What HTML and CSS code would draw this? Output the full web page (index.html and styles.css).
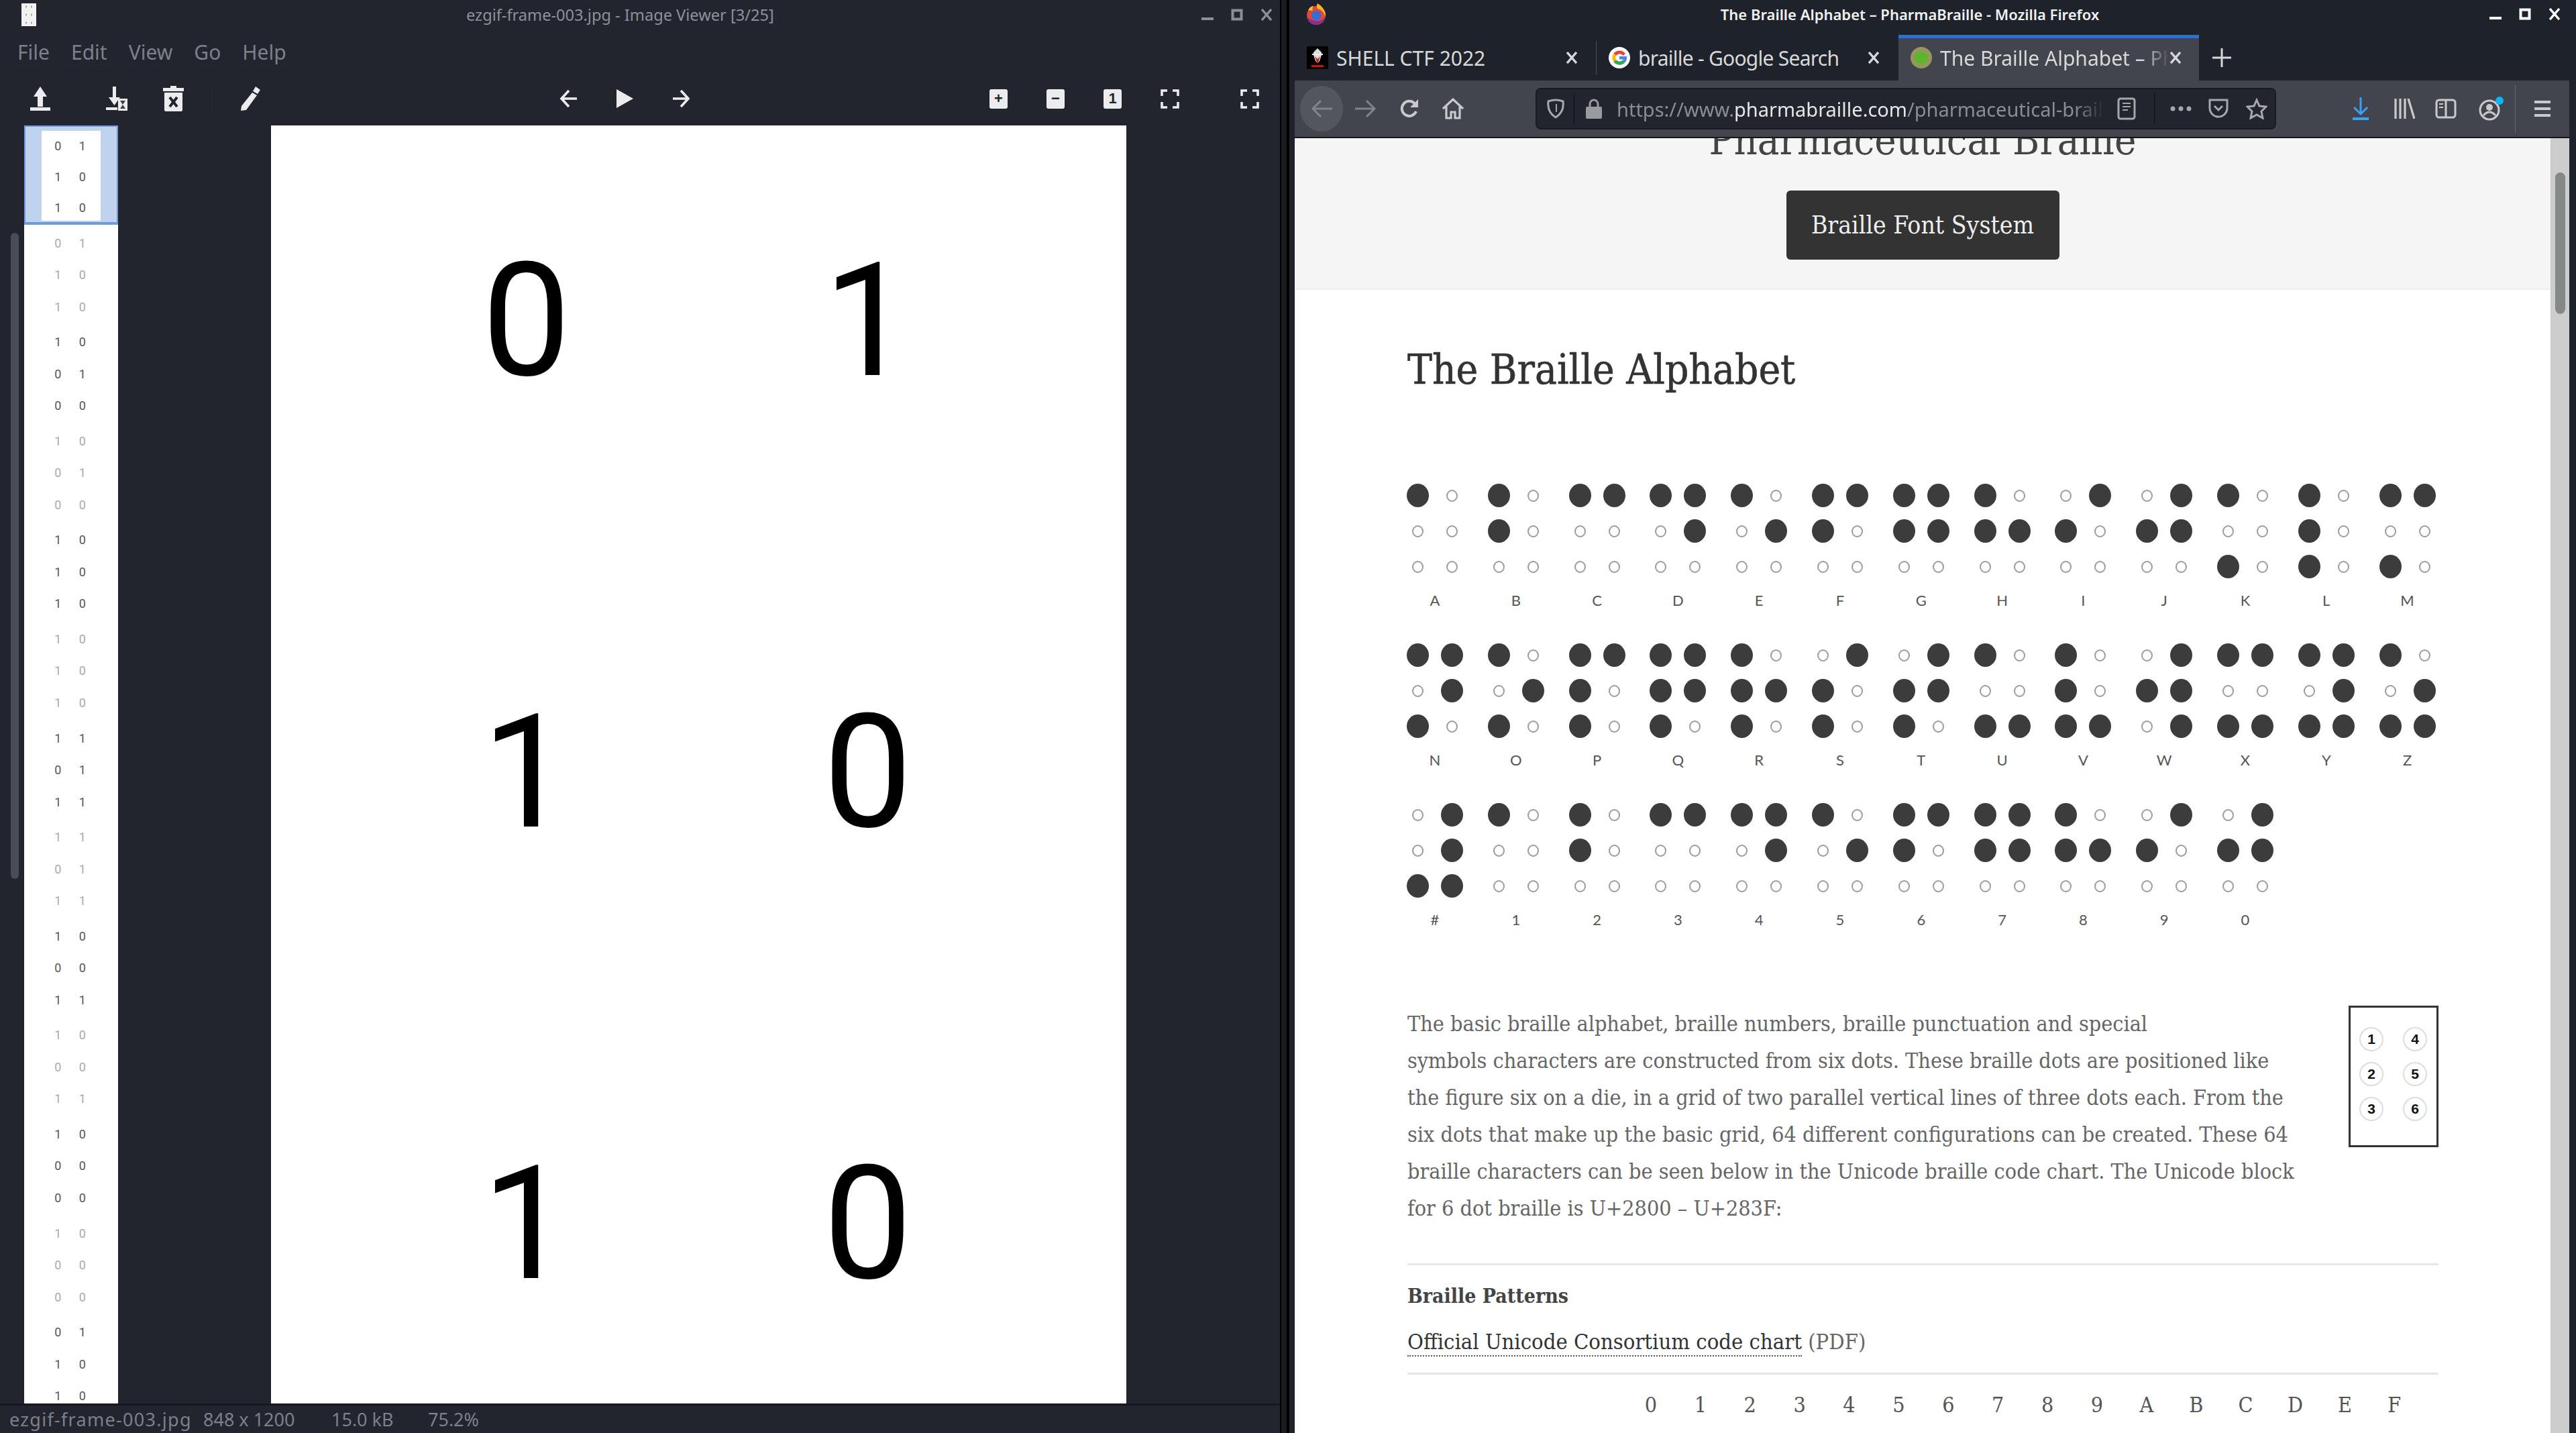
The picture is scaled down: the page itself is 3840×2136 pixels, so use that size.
FILE: index.html
```html
<!DOCTYPE html>
<html lang="en">
<head>
    <meta charset="UTF-8">
    <meta name="viewport" content="width=device-width, initial-scale=1.0">
    <title>Desktop</title>
    <link rel="stylesheet" href="styles.css">
</head>
<body>

<svg class="defs" width="0" height="0">
    <symbol id="win-x" viewBox="0 0 18 18"><path d="M2 1L16 17M16 1L2 17" fill="none" stroke="currentColor" stroke-width="3.4"/></symbol>
    <symbol id="win-min" viewBox="0 0 18 18"><rect x="0" y="13" width="18" height="4" fill="currentColor"/></symbol>
    <symbol id="win-max" viewBox="0 0 18 18"><rect x="2.5" y="2.5" width="13" height="13" fill="none" stroke="currentColor" stroke-width="4"/></symbol>
    <symbol id="fit" viewBox="0 0 28 29"><path d="M2 10V2H10M18 2H26V10M2 19V27H10M18 27H26V19" fill="none" stroke="currentColor" stroke-width="3.6"/></symbol>
</svg>

<!-- image viewer -->
<div class="viewer">
    <div class="titlebar">
        <svg class="app-thumb" width="22" height="34" viewBox="0 0 22 34"><rect width="22" height="34" fill="#f2f2f2"/><path d="M6 5h2M14 5h2M6 17h2M14 17h2M6 29h2M14 29h2" stroke="#aaa" stroke-width="3"/></svg>
        <span class="win-title">ezgif-frame-003.jpg - Image Viewer [3/25]</span>
        <div class="win-btns">
            <svg><use href="#win-min"/></svg>
            <svg><use href="#win-max"/></svg>
            <svg><use href="#win-x"/></svg>
        </div>
    </div>
    <div class="menubar">
        <span>File</span><span>Edit</span><span>View</span><span>Go</span><span>Help</span>
    </div>
    <div class="toolbar">
        <div class="tool"><svg width="30" height="36" viewBox="0 0 30 36"><path d="M15 0L25 15H19V30H11V15H5ZM0 31H30V36H0Z" fill="currentColor"/></svg></div>
        <div class="sep"></div>
        <div class="tool"><svg width="32" height="36" viewBox="0 0 32 36"><path d="M10 0H15V16H21L12.500 28L4 16H10ZM0 31H17V35H0ZM18 18H32V36H18Z" fill="currentColor"/><path d="M21 21H29L21 33H29Z" fill="#3a3d46"/></svg></div>
        <div class="tool"><svg width="31" height="38" viewBox="0 0 31 38"><path d="M11 0H20V3H31V8H0V3H11ZM2 10H29V36Q29 38 27 38H4Q2 38 2 36Z" fill="currentColor"/><path d="M10 17L21 31M21 17L10 31" stroke="#22252e" stroke-width="4"/></svg></div>
        <div class="sep"></div>
        <div class="tool"><svg width="32" height="36" viewBox="0 0 32 36"><path d="M24 0L31 5L27 11L20 7ZM19 9L26 13L10 35L2 36L3 29Z" fill="currentColor"/></svg></div>
        <div class="tool nav-first"><svg width="27" height="28" viewBox="0 0 27 28"><path d="M27 14H4M15 2L4 14L15 26" fill="none" stroke="currentColor" stroke-width="3.6"/></svg></div>
        <div class="tool"><svg width="25" height="28" viewBox="0 0 25 28"><path d="M0 0L25 14L0 28Z" fill="currentColor"/></svg></div>
        <div class="tool"><svg width="27" height="28" viewBox="0 0 27 28"><path d="M0 14H23M12 2L23 14L12 26" fill="none" stroke="currentColor" stroke-width="3.6"/></svg></div>
        <div class="tool zoom-first"><span class="zoom-key">+</span></div>
        <div class="tool"><span class="zoom-key">−</span></div>
        <div class="tool"><span class="zoom-key">1</span></div>
        <div class="tool"><svg width="28" height="29"><use href="#fit"/></svg></div>
        <div class="sep sep-end"></div>
        <div class="tool"><svg width="32" height="29"><use href="#fit"/></svg></div>
    </div>
    <div class="viewer-main">
        <div class="side-scroll"><div class="side-thumb"></div></div>
        <div class="strip">
            <div class="frame current"><div class="frame-inner"><b>0 1</b><b>1 0</b><b>1 0</b></div></div>
            <div class="frame faded"><b>0 1</b><b>1 0</b><b>1 0</b></div>
            <div class="frame"><b>1 0</b><b>0 1</b><b>0 0</b></div>
            <div class="frame faded"><b>1 0</b><b>0 1</b><b>0 0</b></div>
            <div class="frame"><b>1 0</b><b>1 0</b><b>1 0</b></div>
            <div class="frame faded"><b>1 0</b><b>1 0</b><b>1 0</b></div>
            <div class="frame"><b>1 1</b><b>0 1</b><b>1 1</b></div>
            <div class="frame faded"><b>1 1</b><b>0 1</b><b>1 1</b></div>
            <div class="frame"><b>1 0</b><b>0 0</b><b>1 1</b></div>
            <div class="frame faded"><b>1 0</b><b>0 0</b><b>1 1</b></div>
            <div class="frame"><b>1 0</b><b>0 0</b><b>0 0</b></div>
            <div class="frame faded"><b>1 0</b><b>0 0</b><b>0 0</b></div>
            <div class="frame"><b>0 1</b><b>1 0</b><b>1 0</b></div>
        </div>
        <div class="picture">
            <span>0</span><span>1</span>
            <span>1</span><span>0</span>
            <span>1</span><span>0</span>
        </div>
    </div>
    <div class="statusbar">
        <span class="st-name">ezgif-frame-003.jpg</span>
        <span class="st-size">848 x 1200</span>
        <span class="st-kb">15.0 kB</span>
        <span>75.2%</span>
    </div>
</div>

<div class="gutter"></div>

<!-- firefox -->
<div class="firefox">
    <div class="titlebar ff-title">
        <svg class="ff-logo" width="30" height="32" viewBox="0 0 30 32">
            <circle cx="15" cy="18" r="14" fill="#e8452f"/>
            <path d="M1 18C1 26 8 32 15 32C23 32 29 26 29 18C26 26 18 28 10 25C5 24 2 21 1 18Z" fill="#8a2f8f"/>
            <path d="M17 0C25 5 30 12 29 20C26 12 22 9 17 8C15 5 16 3 17 0Z" fill="#fcb32c"/>
            <path d="M3 10C5 6 8 4 11 4C9 7 9 9 10 11Z" fill="#fdc42d"/>
            <circle cx="15" cy="18" r="7.500" fill="#3c6ad6"/>
        </svg>
        <span class="win-title">The Braille Alphabet – PharmaBraille - Mozilla Firefox</span>
        <div class="win-btns">
            <svg><use href="#win-min"/></svg>
            <svg><use href="#win-max"/></svg>
            <svg><use href="#win-x"/></svg>
        </div>
    </div>
    <div class="tabs">
        <div class="tab divided">
            <svg class="fav" width="32" height="34" viewBox="0 0 32 34"><rect width="32" height="34" fill="#000"/><path d="M16 3L22 9V13L19 22L16 25L13 22L10 13V9Z" fill="#ddd"/><path d="M8 11H24V13H8Z" fill="#eee"/><path d="M12 15L16 19L20 15L17 24H15Z" fill="#b22"/><rect x="7" y="28" width="18" height="3" fill="#c11"/></svg>
            <span class="tab-label">SHELL CTF 2022</span>
            <svg class="tab-x"><use href="#win-x"/></svg>
        </div>
        <div class="tab">
            <svg class="fav" width="32" height="34" viewBox="0 0 32 34">
                <circle cx="16" cy="17" r="16" fill="#fff"/>
                <path d="M25 11A11 11 0 0 0 7.500 10.500L11 14A6.500 6.500 0 0 1 21.500 14Z" fill="#ea4335"/>
                <path d="M7.500 10.500A11 11 0 0 0 7.500 23.500L11 20A6.500 6.500 0 0 1 11 14Z" fill="#fbbc05"/>
                <path d="M7.500 23.500A11 11 0 0 0 24.500 24L21 20.500A6.500 6.500 0 0 1 11 20Z" fill="#34a853"/>
                <path d="M27 15H16V19.500H22A6 6 0 0 1 21 20.500L24.500 24A11 11 0 0 0 27 15Z" fill="#4285f4"/>
            </svg>
            <span class="tab-label tab-tight">braille - Google Search</span>
            <svg class="tab-x"><use href="#win-x"/></svg>
        </div>
        <div class="tab active">
            <svg class="fav" width="32" height="34" viewBox="0 0 32 34"><circle cx="16" cy="17" r="16" fill="#97975c"/><circle cx="16" cy="17" r="10" fill="#5db52e"/></svg>
            <span class="tab-label fade">The Braille Alphabet – PharmaBraille</span>
            <svg class="tab-x"><use href="#win-x"/></svg>
        </div>
        <svg class="new-tab" width="28" height="28" viewBox="0 0 28 28"><path d="M14 0V28M0 14H28" stroke="currentColor" stroke-width="3"/></svg>
    </div>
    <div class="nav">
        <div class="nav-btn back"><svg width="32" height="28" viewBox="0 0 32 28"><path d="M32 14H3M15 2L3 14L15 26" fill="none" stroke="currentColor" stroke-width="3"/></svg></div>
        <div class="nav-btn off"><svg width="32" height="28" viewBox="0 0 32 28"><path d="M0 14H29M17 2L29 14L17 26" fill="none" stroke="currentColor" stroke-width="3"/></svg></div>
        <div class="nav-btn"><svg width="30" height="30" viewBox="0 0 30 30"><path d="M25 19A11 11 0 1 1 23 7.500" fill="none" stroke="currentColor" stroke-width="4"/><path d="M28 1V13H16Z" fill="currentColor"/></svg></div>
        <div class="nav-btn"><svg width="32" height="32" viewBox="0 0 32 32"><path d="M1 16L16 2L31 16M6 13V30H13V21H19V30H26V13" fill="none" stroke="currentColor" stroke-width="3.200"/></svg></div>
        <div class="urlbar">
            <div class="url-icon shield"><svg width="26" height="30" viewBox="0 0 26 30"><path d="M2 4Q13 0 24 4Q26 20 13 28Q0 20 2 4Z" fill="none" stroke="currentColor" stroke-width="3"/><path d="M13 8L15 8V20H13Z" fill="currentColor"/></svg></div>
            <div class="url-sep"></div>
            <div class="url-icon lock"><svg width="26" height="30" viewBox="0 0 26 30"><path d="M7 13V8A6 6 0 0 1 19 8V13" fill="none" stroke="currentColor" stroke-width="3"/><rect x="1" y="12" width="24" height="18" rx="2" fill="currentColor"/></svg></div>
            <div class="url-text"><span>https://www.</span><em>pharmabraille.com</em><span>/pharmaceutical-braille</span></div>
            <div class="url-icon reader"><svg width="28" height="34" viewBox="0 0 28 34"><rect x="2" y="2" width="24" height="30" rx="3" fill="none" stroke="currentColor" stroke-width="3"/><path d="M8 9H20M8 14H20M8 19H16" stroke="currentColor" stroke-width="2"/></svg></div>
            <div class="url-sep sep-page"></div>
            <div class="url-icon more"><svg width="32" height="8" viewBox="0 0 32 8"><circle cx="4" cy="4" r="3.500" fill="currentColor"/><circle cx="16" cy="4" r="3.500" fill="currentColor"/><circle cx="28" cy="4" r="3.500" fill="currentColor"/></svg></div>
            <div class="url-icon pocket"><svg width="32" height="32" viewBox="0 0 32 32"><path d="M3 3H29V15A13 13 0 0 1 3 15Z" fill="none" stroke="currentColor" stroke-width="3"/><path d="M10 12L16 18L22 12" fill="none" stroke="currentColor" stroke-width="3"/></svg></div>
            <div class="url-icon star"><svg width="32" height="32" viewBox="0 0 32 32"><path d="M16 3L20 12L30 13L23 20L25 30L16 25L7 30L9 20L2 13L12 12Z" fill="none" stroke="currentColor" stroke-width="3"/></svg></div>
        </div>
        <div class="nav-btn dl"><svg width="26" height="34" viewBox="0 0 26 34"><path d="M13 0V25M3 15L13 25L23 15" fill="none" stroke="currentColor" stroke-width="3"/><rect x="1" y="30" width="24" height="4" fill="currentColor"/></svg></div>
        <div class="nav-btn"><svg width="32" height="30" viewBox="0 0 32 30"><path d="M3 0V30M10 0V30M17 0V30M22 0L31 30" fill="none" stroke="currentColor" stroke-width="3.200"/></svg></div>
        <div class="nav-btn side-btn"><svg width="32" height="30" viewBox="0 0 32 30"><rect x="2" y="2" width="28" height="26" rx="4" fill="none" stroke="currentColor" stroke-width="3"/><path d="M16 2V28" stroke="currentColor" stroke-width="3"/><path d="M6 8H12M6 13H12" stroke="currentColor" stroke-width="2"/></svg></div>
        <div class="nav-btn account"><svg width="38" height="36" viewBox="0 0 38 36"><circle cx="16" cy="20" r="14" fill="none" stroke="currentColor" stroke-width="3"/><circle cx="16" cy="16" r="5" fill="currentColor"/><path d="M7 28Q16 18 25 28" fill="none" stroke="currentColor" stroke-width="3"/><circle cx="31" cy="6" r="6" fill="#0ab4f5"/></svg></div>
        <div class="nav-sep"></div>
        <div class="nav-btn menu"><svg width="26" height="26" viewBox="0 0 26 26"><path d="M1 3H25M1 13H25M1 23H25" stroke="currentColor" stroke-width="4"/></svg></div>
    </div>
    <div class="page">
        <div class="doc">
            <div class="hero">
                <h2>Pharmaceutical Braille</h2>
                <a class="font-btn">Braille Font System</a>
            </div>
            <div class="content">
                <h1>The Braille Alphabet</h1>
                <div class="chart">
                    <div class="cell"><div class="dots"><i class="on"></i><i></i><i></i><i></i><i></i><i></i></div><span>A</span></div>
                    <div class="cell"><div class="dots"><i class="on"></i><i></i><i class="on"></i><i></i><i></i><i></i></div><span>B</span></div>
                    <div class="cell"><div class="dots"><i class="on"></i><i class="on"></i><i></i><i></i><i></i><i></i></div><span>C</span></div>
                    <div class="cell"><div class="dots"><i class="on"></i><i class="on"></i><i></i><i class="on"></i><i></i><i></i></div><span>D</span></div>
                    <div class="cell"><div class="dots"><i class="on"></i><i></i><i></i><i class="on"></i><i></i><i></i></div><span>E</span></div>
                    <div class="cell"><div class="dots"><i class="on"></i><i class="on"></i><i class="on"></i><i></i><i></i><i></i></div><span>F</span></div>
                    <div class="cell"><div class="dots"><i class="on"></i><i class="on"></i><i class="on"></i><i class="on"></i><i></i><i></i></div><span>G</span></div>
                    <div class="cell"><div class="dots"><i class="on"></i><i></i><i class="on"></i><i class="on"></i><i></i><i></i></div><span>H</span></div>
                    <div class="cell"><div class="dots"><i></i><i class="on"></i><i class="on"></i><i></i><i></i><i></i></div><span>I</span></div>
                    <div class="cell"><div class="dots"><i></i><i class="on"></i><i class="on"></i><i class="on"></i><i></i><i></i></div><span>J</span></div>
                    <div class="cell"><div class="dots"><i class="on"></i><i></i><i></i><i></i><i class="on"></i><i></i></div><span>K</span></div>
                    <div class="cell"><div class="dots"><i class="on"></i><i></i><i class="on"></i><i></i><i class="on"></i><i></i></div><span>L</span></div>
                    <div class="cell"><div class="dots"><i class="on"></i><i class="on"></i><i></i><i></i><i class="on"></i><i></i></div><span>M</span></div>

                    <div class="cell"><div class="dots"><i class="on"></i><i class="on"></i><i></i><i class="on"></i><i class="on"></i><i></i></div><span>N</span></div>
                    <div class="cell"><div class="dots"><i class="on"></i><i></i><i></i><i class="on"></i><i class="on"></i><i></i></div><span>O</span></div>
                    <div class="cell"><div class="dots"><i class="on"></i><i class="on"></i><i class="on"></i><i></i><i class="on"></i><i></i></div><span>P</span></div>
                    <div class="cell"><div class="dots"><i class="on"></i><i class="on"></i><i class="on"></i><i class="on"></i><i class="on"></i><i></i></div><span>Q</span></div>
                    <div class="cell"><div class="dots"><i class="on"></i><i></i><i class="on"></i><i class="on"></i><i class="on"></i><i></i></div><span>R</span></div>
                    <div class="cell"><div class="dots"><i></i><i class="on"></i><i class="on"></i><i></i><i class="on"></i><i></i></div><span>S</span></div>
                    <div class="cell"><div class="dots"><i></i><i class="on"></i><i class="on"></i><i class="on"></i><i class="on"></i><i></i></div><span>T</span></div>
                    <div class="cell"><div class="dots"><i class="on"></i><i></i><i></i><i></i><i class="on"></i><i class="on"></i></div><span>U</span></div>
                    <div class="cell"><div class="dots"><i class="on"></i><i></i><i class="on"></i><i></i><i class="on"></i><i class="on"></i></div><span>V</span></div>
                    <div class="cell"><div class="dots"><i></i><i class="on"></i><i class="on"></i><i class="on"></i><i></i><i class="on"></i></div><span>W</span></div>
                    <div class="cell"><div class="dots"><i class="on"></i><i class="on"></i><i></i><i></i><i class="on"></i><i class="on"></i></div><span>X</span></div>
                    <div class="cell"><div class="dots"><i class="on"></i><i class="on"></i><i></i><i class="on"></i><i class="on"></i><i class="on"></i></div><span>Y</span></div>
                    <div class="cell"><div class="dots"><i class="on"></i><i></i><i></i><i class="on"></i><i class="on"></i><i class="on"></i></div><span>Z</span></div>

                    <div class="cell"><div class="dots"><i></i><i class="on"></i><i></i><i class="on"></i><i class="on"></i><i class="on"></i></div><span>#</span></div>
                    <div class="cell"><div class="dots"><i class="on"></i><i></i><i></i><i></i><i></i><i></i></div><span>1</span></div>
                    <div class="cell"><div class="dots"><i class="on"></i><i></i><i class="on"></i><i></i><i></i><i></i></div><span>2</span></div>
                    <div class="cell"><div class="dots"><i class="on"></i><i class="on"></i><i></i><i></i><i></i><i></i></div><span>3</span></div>
                    <div class="cell"><div class="dots"><i class="on"></i><i class="on"></i><i></i><i class="on"></i><i></i><i></i></div><span>4</span></div>
                    <div class="cell"><div class="dots"><i class="on"></i><i></i><i></i><i class="on"></i><i></i><i></i></div><span>5</span></div>
                    <div class="cell"><div class="dots"><i class="on"></i><i class="on"></i><i class="on"></i><i></i><i></i><i></i></div><span>6</span></div>
                    <div class="cell"><div class="dots"><i class="on"></i><i class="on"></i><i class="on"></i><i class="on"></i><i></i><i></i></div><span>7</span></div>
                    <div class="cell"><div class="dots"><i class="on"></i><i></i><i class="on"></i><i class="on"></i><i></i><i></i></div><span>8</span></div>
                    <div class="cell"><div class="dots"><i></i><i class="on"></i><i class="on"></i><i></i><i></i><i></i></div><span>9</span></div>
                    <div class="cell"><div class="dots"><i></i><i class="on"></i><i class="on"></i><i class="on"></i><i></i><i></i></div><span>0</span></div>
                </div>
                <div class="intro">
                    <p>The basic braille alphabet, braille numbers, braille punctuation and special<br>symbols characters are constructed from six dots. These braille dots are positioned like<br>the figure six on a die, in a grid of two parallel vertical lines of three dots each. From the<br>six dots that make up the basic grid, 64 different configurations can be created. These 64<br>braille characters can be seen below in the Unicode braille code chart. The Unicode block<br>for 6 dot braille is U+2800 – U+283F:</p>
                    <div class="dot-key">
                        <span>1</span><span>4</span>
                        <span>2</span><span>5</span>
                        <span>3</span><span>6</span>
                    </div>
                </div>
                <hr>
                <h3>Braille Patterns</h3>
                <p class="chart-link"><a>Official Unicode Consortium code chart</a> (PDF)</p>
                <hr class="hr-table">
                <div class="code-head">
                    <span>0</span><span>1</span><span>2</span><span>3</span><span>4</span><span>5</span><span>6</span><span>7</span>
                    <span>8</span><span>9</span><span>A</span><span>B</span><span>C</span><span>D</span><span>E</span><span>F</span>
                </div>
            </div>
        </div>
        <div class="scrollbar"><div class="scroll-thumb"></div></div>
    </div>
</div>

</body>
</html>
```

FILE: styles.css
```css
* {
    box-sizing: border-box;
}
body {
    margin: 0;
    width: 3840px;
    height: 2136px;
    overflow: hidden;
    display: flex;
    background-color: #1e222a;
    font-family: "Noto Sans", sans-serif;
}
.defs {
    position: absolute;
}

/* shared window chrome */
.titlebar {
    display: grid;
    align-items: center;
    height: 44px;
    flex: none;
}
.win-btns {
    display: flex;
    justify-content: flex-end;
    gap: 26px;
}
.win-btns svg {
    width: 18px;
    height: 18px;
}

/* image viewer */
.viewer {
    width: 1908px;
    height: 2136px;
    display: flex;
    flex-direction: column;
    background-color: #22252e;
    color: #7c808b;
}
.viewer .titlebar {
    grid-template-columns: 695px 458px 1fr;
    padding-right: 11px;
}
.app-thumb {
    margin-left: 32px;
}
.viewer .win-title {
    font-size: 23.600px;
    color: #8d9099;
    white-space: nowrap;
    text-align: center;
}
.viewer .win-btns {
    color: #8c8f97;
}
.menubar {
    height: 63px;
    flex: none;
    display: flex;
    align-items: center;
    gap: 32px;
    padding: 5px 0 0 26px;
    font-size: 30px;
    border-bottom: 1px solid #1f2229;
}
.toolbar {
    height: 80px;
    flex: none;
    display: flex;
    align-items: center;
    padding-left: 17px;
    color: #ececee;
}
.tool {
    width: 85px;
    display: flex;
    justify-content: center;
    align-items: center;
}
.sep {
    width: 29px;
    height: 60px;
    background: linear-gradient(#262931, #262931) center / 1px 100% no-repeat;
}
.sep-end {
    margin-left: 4px;
    margin-right: 1px;
}
.nav-first {
    margin-left: 389px;
}
.zoom-first {
    margin-left: 387px;
}
.zoom-key {
    width: 27px;
    height: 29px;
    background-color: #ececee;
    border-radius: 3px;
    color: #22252e;
    font-family: "Liberation Sans", sans-serif;
    font-weight: bold;
    font-size: 22px;
    line-height: 28px;
    text-align: center;
}

.viewer-main {
    flex: 1;
    min-height: 0;
    display: flex;
    border-bottom: 3px solid #16181d;
}
.side-scroll {
    width: 36px;
    padding: 160px 8px 0 16px;
    flex: none;
}
.side-thumb {
    height: 963px;
    background-color: #4a4d57;
    border-radius: 6px;
}
.strip {
    width: 140px;
    flex: none;
    background-color: #fff;
    overflow: hidden;
}
.frame {
    height: 147.600px;
    padding-top: 4px;
    font-family: Roboto, sans-serif;
    color: #555;
}
.frame b,
.frame-inner b {
    display: block;
    height: 47.500px;
    padding-right: 3px;
    line-height: 47.500px;
    font-size: 18px;
    font-weight: 400;
    text-align: center;
    word-spacing: 22px;
}
.faded {
    color: #aaa;
}
.current {
    padding: 6px 24px 4px;
    background-color: #bfd2ee;
    border: 2px solid #6f9bdc;
    border-bottom-width: 4px;
    border-top-width: 2px;
}
.frame-inner {
    background-color: #fff;
    height: 134px;
}
.current .frame-inner b {
    height: 46px;
    line-height: 46px;
}
.picture {
    margin-left: 228px;
    width: 1275px;
    flex: none;
    background-color: #fff;
    overflow: hidden;
    display: grid;
    grid-template-columns: 507px 511px;
    grid-auto-rows: 573px;
    row-gap: 100px;
    padding: 5px 0 0 127px;
    font-family: Roboto, sans-serif;
    font-weight: 400;
    font-size: 236px;
    color: #000;
    text-align: center;
}
.picture span {
    line-height: 573px;
}
.statusbar {
    height: 41px;
    flex: none;
    display: flex;
    align-items: center;
    padding-left: 14px;
    font-size: 27px;
    white-space: nowrap;
}
.statusbar span {
    flex: none;
}
.st-name {
    width: 289px;
    letter-spacing: 1.300px;
}
.st-size {
    width: 191px;
}
.st-kb {
    width: 144px;
}

/* firefox */
.gutter {
    width: 14px;
    flex: none;
    background: linear-gradient(90deg, #000 2px, #181b20 2px, #181b20 10px, #000 10px);
}
.firefox {
    width: 1918px;
    flex: none;
    padding: 0 10px 0 8px;
    display: flex;
    flex-direction: column;
    color: #fff;
}
.ff-title {
    height: 52px;
    padding-bottom: 10px;
    grid-template-columns: 634px 566px 1fr;
}
.ff-logo {
    margin-left: 17px;
}
.ff-title .win-title {
    font-size: 22px;
    font-weight: 600;
    color: #f0f0f0;
    white-space: nowrap;
    text-align: center;
}
.ff-title .win-btns {
    padding-right: 13px;
}
.tabs {
    height: 68px;
    display: flex;
    align-items: stretch;
    flex: none;
    color: #d7d8da;
}
.tab {
    width: 450px;
    display: flex;
    align-items: center;
    padding: 0 28px 0 18px;
}
.divided {
    background: linear-gradient(#4c4f57, #4c4f57) right center / 1px 50px no-repeat;
}
.tab.active {
    width: 448px;
    background-color: #42454d;
    border-top: 5px solid #2a6fdb;
    padding: 0 26px 5px 18px;
}
.fav {
    flex: none;
}
.tab-label {
    flex: 1;
    margin-left: 12px;
    font-size: 30px;
    white-space: nowrap;
    overflow: hidden;
}
.tab-tight {
    letter-spacing: -0.750px;
}
.fade {
    -webkit-mask-image: linear-gradient(90deg, #000 88%, transparent);
    mask-image: linear-gradient(90deg, #000 88%, transparent);
}
.tab-x {
    width: 18px;
    height: 18px;
    flex: none;
}
.new-tab {
    align-self: center;
    margin-left: 20px;
}
.nav {
    height: 86px;
    flex: none;
    display: flex;
    align-items: center;
    background-color: #42454d;
    border-bottom: 2px solid #14161a;
    padding-left: 8px;
    color: #c9cacc;
}
.nav-btn {
    width: 65px;
    height: 68px;
    flex: none;
    display: flex;
    align-items: center;
    justify-content: center;
}
.back {
    width: 64px;
    margin-right: 1px;
    background-color: #54565e;
    border-radius: 50%;
    color: #81838a;
}
.off {
    color: #81838a;
}
.side-btn {
    margin: 0 3px 0 -3px;
}
.urlbar {
    width: 1104px;
    height: 62px;
    margin-left: 91px;
    margin-right: 93px;
    flex: none;
    display: flex;
    align-items: center;
    background-color: #22252e;
    border: 2px solid #191b20;
    border-radius: 8px;
    color: #a6a7ab;
}
.url-icon {
    display: flex;
    align-items: center;
    justify-content: center;
    flex: none;
}
.url-sep {
    width: 1px;
    height: 46px;
    background-color: #0e0f12;
    flex: none;
}
.shield {
    width: 55px;
}
.lock {
    width: 58px;
    color: #9a9ba0;
}
.url-text {
    width: 727px;
    margin-left: 5px;
    flex: none;
    font-size: 29px;
    white-space: nowrap;
    overflow: hidden;
    color: #8b8d93;
    -webkit-mask-image: linear-gradient(90deg, #000 94%, transparent);
    mask-image: linear-gradient(90deg, #000 94%, transparent);
}
.url-text em {
    font-style: normal;
    color: #e6e6e8;
}
.reader {
    width: 66px;
}
.sep-page {
    margin-left: 8px;
}
.more {
    width: 78px;
}
.pocket {
    width: 34px;
}
.star {
    width: 40px;
    margin-left: 20px;
}
.dl {
    color: #3aa0f0;
}
.account {
    color: #c9cacc;
}
.nav-sep {
    width: 1px;
    height: 72px;
    margin-left: 3px;
    background-color: #62656c;
    flex: none;
}
.menu {
    width: 80px;
}

/* the page inside the browser */
.page {
    flex: 1;
    min-height: 0;
    display: flex;
    background-color: #fff;
    color: #555;
    font-family: "DejaVu Serif Condensed", "DejaVu Serif", serif;
    overflow: hidden;
}
.doc {
    flex: 1;
    min-width: 0;
    overflow: hidden;
}
.scrollbar {
    width: 28px;
    flex: none;
    padding: 51px 6px 0;
    background-color: #cdcdcd;
    border-left: 1px solid #c9c5c0;
}
.scroll-thumb {
    height: 211px;
    background-color: #858888;
    border-radius: 8px;
}
.hero {
    height: 226px;
    display: flex;
    flex-direction: column;
    align-items: center;
    background-color: #f5f5f5;
    border-bottom: 2px solid #eee;
    overflow: hidden;
}
.hero h2 {
    margin: -37px 0 0;
    height: 115px;
    flex: none;
    font-size: 61px;
    font-weight: 400;
    line-height: 80px;
    color: #444;
    white-space: nowrap;
}
.font-btn {
    width: 407px;
    height: 103px;
    flex: none;
    display: flex;
    align-items: center;
    justify-content: center;
    background-color: #333;
    border-radius: 6px;
    color: #eee;
    font-size: 37px;
}
.content {
    padding: 79px 167px 0 168px;
}
.content h1 {
    margin: 0;
    font-size: 61.500px;
    line-height: 80px;
    font-weight: 400;
    color: #333;
    -webkit-text-stroke: 0.6px #333;
}
.chart {
    margin: 121px 0 0 -10px;
    display: grid;
    grid-template-columns: repeat(13, 120.800px);
    grid-auto-rows: 238px;
}
.cell {
    width: 102px;
    text-align: center;
}
.dots {
    display: grid;
    grid-template-columns: 51px 51px;
    grid-auto-rows: 53px;
    align-items: center;
    justify-items: center;
}
.dots i {
    width: 17px;
    height: 18px;
    border: 2.500px solid #9c9c9c;
    border-radius: 50%;
}
.dots i.on {
    width: 33px;
    height: 35px;
    border: 0;
    background-color: #3c3c3c;
}
.cell span {
    display: block;
    margin-top: 12px;
    font-family: Lato, sans-serif;
    font-size: 22px;
    line-height: 24px;
    color: #555;
}
.intro {
    margin-top: 73px;
    display: flex;
    justify-content: space-between;
}
.intro p {
    margin: 0;
    font-size: 32.100px;
    line-height: 55px;
    color: #666;
    white-space: nowrap;
}
.dot-key {
    width: 134px;
    height: 211px;
    flex: none;
    display: grid;
    grid-template-columns: 65px 65px;
    grid-auto-rows: 52px;
    padding: 29px 0 0 13px;
    border: 3px solid #333;
    background-color: #fff;
}
.dot-key span {
    width: 36px;
    height: 36px;
    border: 2px solid #ddd;
    border-radius: 50%;
    font-family: "Liberation Sans", sans-serif;
    font-weight: bold;
    font-size: 21px;
    line-height: 32px;
    text-align: center;
    color: #111;
}
.content hr {
    margin: 54px 0 0;
    height: 3px;
    border: 0;
    background-color: #e6e6e6;
}
.content h3 {
    margin: 19px 0 0;
    font-size: 30px;
    line-height: 54.600px;
    font-weight: bold;
    color: #444;
}
.chart-link {
    margin: 13px 0 0;
    font-size: 32.500px;
    line-height: 54.600px;
    color: #666;
}
.chart-link a {
    color: #333;
    border-bottom: 2px dotted #555;
    padding-bottom: 1px;
}
.content hr.hr-table {
    margin-top: 19px;
}
.code-head {
    margin-top: 18px;
    padding-left: 326px;
    display: grid;
    grid-template-columns: repeat(16, 73.900px);
    font-size: 32px;
    line-height: 54.600px;
    color: #555;
    text-align: center;
}
```
